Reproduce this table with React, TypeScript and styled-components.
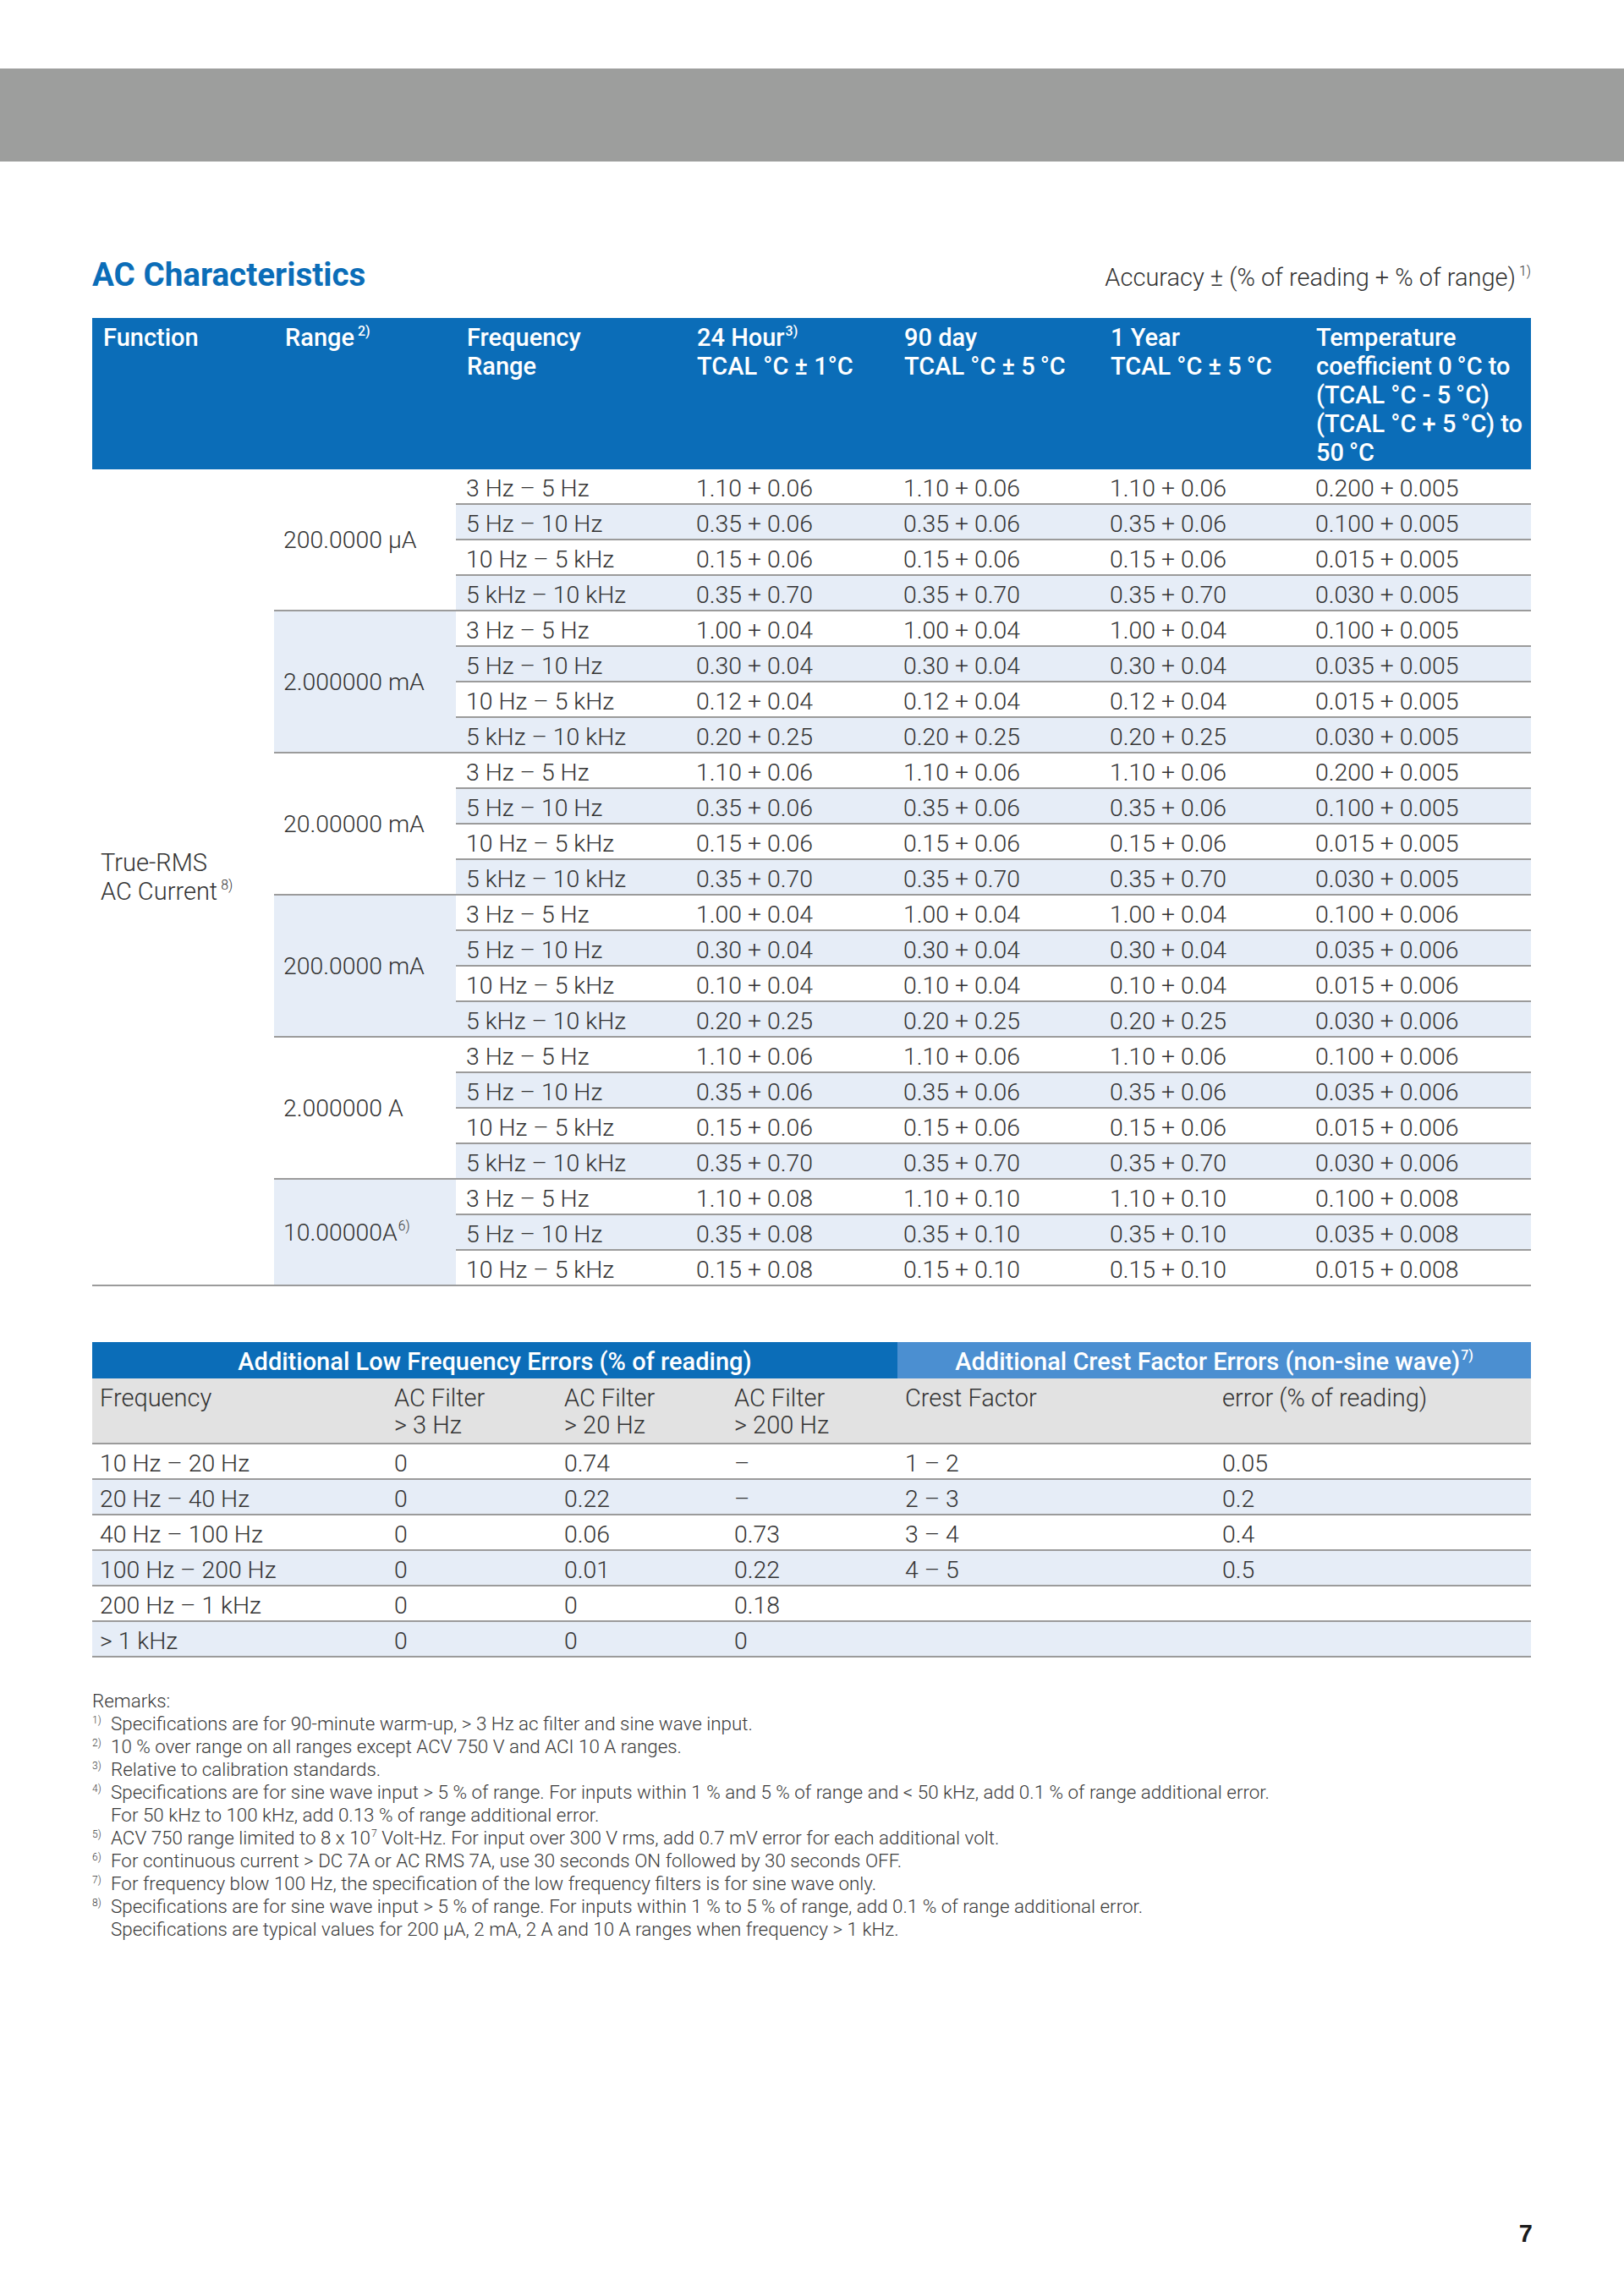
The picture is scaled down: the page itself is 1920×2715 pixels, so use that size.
import React from 'react';
import styled, { createGlobalStyle } from 'styled-components';

const blue = '#0b6db8';
const lightBlue = '#4b8fd1';
const stripe = '#e6edf7';
const rule = '2px solid #9b9b9b';

const GlobalStyle = createGlobalStyle`
  body {
    margin: 0;
    background: #fff;
    font-family: Roboto, 'Liberation Sans', sans-serif;
    color: #333;
  }
`;

const Page = styled.div`
  width: 1920px;
  min-height: 2715px;
  display: flex;
  flex-direction: column;
`;

const Band = styled.div`
  margin-top: 81px;
  height: 110px;
  background: #9d9e9d;
`;

const Content = styled.main`
  padding: 0 110px 0 109px;
`;

const TitleRow = styled.div`
  display: flex;
  justify-content: space-between;
  align-items: baseline;
  margin: 111px 0 28px;
`;

const Title = styled.h1`
  margin: 0;
  font-size: 38.6px;
  line-height: 46px;
  font-weight: 700;
  color: ${blue};
`;

const Accuracy = styled.div`
  font-size: 29px;
  font-weight: 300;
  color: #333;
`;

const Sup = styled.span<{ $gap?: boolean }>`
  position: relative;
  top: -0.75em;
  font-size: 0.55em;
  line-height: 0;
  margin-left: ${(p) => (p.$gap ? '4px' : '1px')};
`;

const Table = styled.table`
  width: 1701px;
  table-layout: fixed;
  border-collapse: separate;
  border-spacing: 0;
`;

const HeadCell = styled.th`
  background: ${blue};
  color: #fff;
  font-size: 29px;
  line-height: 34px;
  font-weight: 500;
  text-align: left;
  vertical-align: top;
  padding: 6px 10px 3px 13px;
  white-space: nowrap;
`;

const Cell = styled.td<{ $shade?: boolean }>`
  background: ${(p) => (p.$shade ? stripe : '#fff')};
  font-size: 28.4px;
  line-height: 35px;
  font-weight: 300;
  padding: 5px 12px 0;
  border-bottom: ${rule};
  white-space: nowrap;
  vertical-align: top;
`;

const FunctionCell = styled(Cell)`
  vertical-align: middle;
  font-size: 29px;
  line-height: 34px;
  padding: 0 10px;
`;

const RangeCell = styled(Cell)`
  vertical-align: middle;
  padding: 0 11px;
`;

const SpecTable = styled(Table)`
  margin-bottom: 66px;
`;

const GroupHead = styled.th<{ $tone: 'dark' | 'light' }>`
  background: ${(p) => (p.$tone === 'dark' ? blue : lightBlue)};
  color: #fff;
  font-size: 29px;
  line-height: 36px;
  font-weight: 500;
  text-align: center;
  padding: 5px 9px 2px;
  white-space: nowrap;
`;

const SubHead = styled.td`
  background: #e2e2e2;
  font-size: 29px;
  line-height: 32px;
  font-weight: 300;
  padding: 7px 9px 5px;
  border-bottom: ${rule};
  vertical-align: top;
  white-space: nowrap;
`;

const ErrCell = styled(Cell)`
  padding: 5px 9px 0;
`;

const Remarks = styled.section`
  margin-top: 38px;
  font-size: 22.4px;
  line-height: 27px;
  font-weight: 300;
  color: #3a3a3a;
`;

const RemarkLine = styled.div`
  display: flex;
`;

const Mark = styled.span`
  flex: 0 0 22px;
  font-size: 12px;
  line-height: 18px;
`;

const PageNumber = styled.div`
  margin-top: auto;
  padding: 0 108px 57px 0;
  text-align: right;
  font-family: 'Liberation Sans', Arial, sans-serif;
  font-weight: 700;
  font-size: 29px;
  line-height: 34px;
  color: #1a1a1a;
`;

type Row = [string, string, string, string, string];

type Group = {
  range: string;
  note?: string;
  shade: boolean;
  rows: Row[];
};

const F1 = '3 Hz – 5 Hz';
const F2 = '5 Hz – 10 Hz';
const F3 = '10 Hz – 5 kHz';
const F4 = '5 kHz – 10 kHz';

// most ranges have the same value for 24 h, 90 day and 1 year
const same = (f: string, v: string, t: string): Row => [f, v, v, v, t];

const groups: Group[] = [
  {
    range: '200.0000 µA',
    shade: false,
    rows: [
      same(F1, '1.10 + 0.06', '0.200 + 0.005'),
      same(F2, '0.35 + 0.06', '0.100 + 0.005'),
      same(F3, '0.15 + 0.06', '0.015 + 0.005'),
      same(F4, '0.35 + 0.70', '0.030 + 0.005'),
    ],
  },
  {
    range: '2.000000 mA',
    shade: true,
    rows: [
      same(F1, '1.00 + 0.04', '0.100 + 0.005'),
      same(F2, '0.30 + 0.04', '0.035 + 0.005'),
      same(F3, '0.12 + 0.04', '0.015 + 0.005'),
      same(F4, '0.20 + 0.25', '0.030 + 0.005'),
    ],
  },
  {
    range: '20.00000 mA',
    shade: false,
    rows: [
      same(F1, '1.10 + 0.06', '0.200 + 0.005'),
      same(F2, '0.35 + 0.06', '0.100 + 0.005'),
      same(F3, '0.15 + 0.06', '0.015 + 0.005'),
      same(F4, '0.35 + 0.70', '0.030 + 0.005'),
    ],
  },
  {
    range: '200.0000 mA',
    shade: true,
    rows: [
      same(F1, '1.00 + 0.04', '0.100 + 0.006'),
      same(F2, '0.30 + 0.04', '0.035 + 0.006'),
      same(F3, '0.10 + 0.04', '0.015 + 0.006'),
      same(F4, '0.20 + 0.25', '0.030 + 0.006'),
    ],
  },
  {
    range: '2.000000 A',
    shade: false,
    rows: [
      same(F1, '1.10 + 0.06', '0.100 + 0.006'),
      same(F2, '0.35 + 0.06', '0.035 + 0.006'),
      same(F3, '0.15 + 0.06', '0.015 + 0.006'),
      same(F4, '0.35 + 0.70', '0.030 + 0.006'),
    ],
  },
  {
    range: '10.00000A',
    note: '6)',
    shade: true,
    rows: [
      [F1, '1.10 + 0.08', '1.10 + 0.10', '1.10 + 0.10', '0.100 + 0.008'],
      [F2, '0.35 + 0.08', '0.35 + 0.10', '0.35 + 0.10', '0.035 + 0.008'],
      [F3, '0.15 + 0.08', '0.15 + 0.10', '0.15 + 0.10', '0.015 + 0.008'],
    ],
  },
];

const totalRows = groups.reduce((n, g) => n + g.rows.length, 0);

const lowFreq: string[][] = [
  ['10 Hz – 20 Hz', '0', '0.74', '–', '1 – 2', '0.05'],
  ['20 Hz – 40 Hz', '0', '0.22', '–', '2 – 3', '0.2'],
  ['40 Hz – 100 Hz', '0', '0.06', '0.73', '3 – 4', '0.4'],
  ['100 Hz – 200 Hz', '0', '0.01', '0.22', '4 – 5', '0.5'],
  ['200 Hz – 1 kHz', '0', '0', '0.18', '', ''],
  ['> 1 kHz', '0', '0', '0', '', ''],
];

const remarks: { mark: string; lines: React.ReactNode[] }[] = [
  { mark: '1)', lines: ['Specifications are for 90-minute warm-up, > 3 Hz ac filter and sine wave input.'] },
  { mark: '2)', lines: ['10 % over range on all ranges except ACV 750 V and ACI 10 A ranges.'] },
  { mark: '3)', lines: ['Relative to calibration standards.'] },
  {
    mark: '4)',
    lines: [
      'Specifications are for sine wave input > 5 % of range. For inputs within 1 % and 5 % of range and < 50 kHz, add 0.1 % of range additional error.',
      'For 50 kHz to 100 kHz, add 0.13 % of range additional error.',
    ],
  },
  {
    mark: '5)',
    lines: [
      <>
        ACV 750 range limited to 8 x 10<Sup>7</Sup> Volt-Hz. For input over 300 V rms, add 0.7 mV error for each additional volt.
      </>,
    ],
  },
  { mark: '6)', lines: ['For continuous current > DC 7A or AC RMS 7A, use 30 seconds ON followed by 30 seconds OFF.'] },
  { mark: '7)', lines: ['For frequency blow 100 Hz, the specification of the low frequency filters is for sine wave only.'] },
  {
    mark: '8)',
    lines: [
      'Specifications are for sine wave input > 5 % of range. For inputs within 1 % to 5 % of range, add 0.1 % of range additional error.',
      'Specifications are typical values for 200 µA, 2 mA, 2 A and 10 A ranges when frequency > 1 kHz.',
    ],
  },
];

const specCols = [215, 215, 272, 245, 244, 243, 267];
const lowCols = [348, 201, 201, 202, 375, 374];

export default function App() {
  let first = true;
  return (
    <Page>
      <GlobalStyle />
      <Band />
      <Content>
        <TitleRow>
          <Title>AC Characteristics</Title>
          <Accuracy>
            Accuracy ± (% of reading + % of range)<Sup $gap>1)</Sup>
          </Accuracy>
        </TitleRow>

        <SpecTable>
          <colgroup>
            {specCols.map((w, i) => (
              <col key={i} style={{ width: w }} />
            ))}
          </colgroup>
          <thead>
            <tr>
              <HeadCell>Function</HeadCell>
              <HeadCell>
                Range<Sup $gap>2)</Sup>
              </HeadCell>
              <HeadCell>
                Frequency
                <br />
                Range
              </HeadCell>
              <HeadCell>
                24 Hour<Sup>3)</Sup>
                <br />
                TCAL °C ± 1°C
              </HeadCell>
              <HeadCell>
                90 day
                <br />
                TCAL °C ± 5{'\u2009'}°C
              </HeadCell>
              <HeadCell>
                1 Year
                <br />
                TCAL °C ± 5{'\u2009'}°C
              </HeadCell>
              <HeadCell>
                Temperature
                <br />
                coefficient 0{'\u2009'}°C to
                <br />
                (TCAL °C - 5{'\u2009'}°C)
                <br />
                (TCAL °C + 5{'\u2009'}°C) to
                <br />
                50{'\u2009'}°C
              </HeadCell>
            </tr>
          </thead>
          <tbody>
            {groups.map((g) =>
              g.rows.map((r, i) => {
                const showFn = first;
                first = false;
                const shade = i % 2 === 1;
                return (
                  <tr key={g.range + i}>
                    {showFn && (
                      <FunctionCell rowSpan={totalRows}>
                        True-RMS
                        <br />
                        AC Current<Sup $gap>8)</Sup>
                      </FunctionCell>
                    )}
                    {i === 0 && (
                      <RangeCell rowSpan={g.rows.length} $shade={g.shade}>
                        {g.range}
                        {g.note && <Sup>{g.note}</Sup>}
                      </RangeCell>
                    )}
                    {r.map((v, j) => (
                      <Cell key={j} $shade={shade}>
                        {v}
                      </Cell>
                    ))}
                  </tr>
                );
              })
            )}
          </tbody>
        </SpecTable>

        <Table>
          <colgroup>
            {lowCols.map((w, i) => (
              <col key={i} style={{ width: w }} />
            ))}
          </colgroup>
          <thead>
            <tr>
              <GroupHead colSpan={4} $tone="dark">
                Additional Low Frequency Errors (% of reading)
              </GroupHead>
              <GroupHead colSpan={2} $tone="light">
                Additional Crest Factor Errors (non-sine wave)<Sup>7)</Sup>
              </GroupHead>
            </tr>
          </thead>
          <tbody>
            <tr>
              <SubHead>Frequency</SubHead>
              <SubHead>
                AC Filter
                <br />
                &gt; 3 Hz
              </SubHead>
              <SubHead>
                AC Filter
                <br />
                &gt; 20 Hz
              </SubHead>
              <SubHead>
                AC Filter
                <br />
                &gt; 200 Hz
              </SubHead>
              <SubHead>Crest Factor</SubHead>
              <SubHead>error (% of reading)</SubHead>
            </tr>
            {lowFreq.map((r, i) => (
              <tr key={r[0]}>
                {r.map((v, j) => (
                  <ErrCell key={j} $shade={i % 2 === 1}>
                    {v}
                  </ErrCell>
                ))}
              </tr>
            ))}
          </tbody>
        </Table>

        <Remarks>
          <div>Remarks:</div>
          {remarks.map((r) =>
            r.lines.map((line, i) => (
              <RemarkLine key={r.mark + i}>
                <Mark>{i === 0 ? r.mark : ''}</Mark>
                <span>{line}</span>
              </RemarkLine>
            ))
          )}
        </Remarks>
      </Content>
      <PageNumber>7</PageNumber>
    </Page>
  );
}
